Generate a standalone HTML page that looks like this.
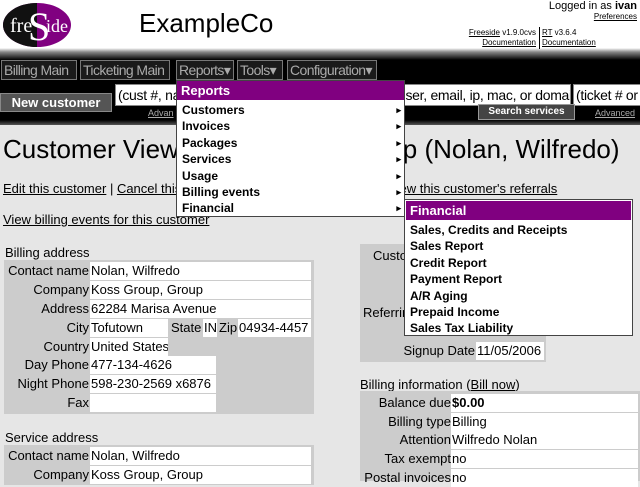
<!DOCTYPE html>
<html><head><meta charset="utf-8"><style>
*{margin:0;padding:0;box-sizing:border-box}
body{width:640px;height:477px;overflow:hidden;background:#e6e6e6;font-family:"Liberation Sans",sans-serif;font-size:13px;color:#000;position:relative}
.a{position:absolute;white-space:nowrap}
.top{position:absolute;left:0;top:0;width:640px;height:50px;background:#fff}
.band{position:absolute;left:0;top:48px;width:640px;height:77px;background:linear-gradient(#fff 0,#888 4px,#000 12px,#000 72px,#555 77px)}
.nb{position:absolute;top:60px;height:20px;border:1px solid #777;background:#1a1a1a;color:#aaa;font-size:14px;line-height:18px;padding:0 2px;white-space:nowrap;overflow:hidden;letter-spacing:-0.6px}
.inp{position:absolute;top:84px;height:22px;background:#fff;border:1px solid #888;font-size:14px;line-height:20px;padding-left:2px;overflow:hidden;white-space:nowrap;letter-spacing:-0.3px}
.menu{position:absolute;background:#fff;border:1px solid #444;font-size:12px;font-weight:bold}
.menu .h{background:#800080;color:#fff;font-size:13px;height:19px;line-height:19px;padding-left:4px}
.menu .i{height:16.4px;line-height:16.4px;padding-left:5px;position:relative}
.menu .i span{position:absolute;right:3px;font-size:9px}
u{text-decoration:underline}
.lbl{position:absolute;text-align:right;white-space:nowrap;line-height:18px;height:18px}
.val{position:absolute;background:#fff;padding-left:1px;white-space:nowrap;overflow:hidden;line-height:18px}
.box{position:absolute;background:#ccc}
</style></head><body>
<div class="top"></div>
<div class="band"></div>
<svg class="a" style="left:2px;top:2px" width="70" height="46" viewBox="0 0 70 46">
<ellipse cx="35" cy="23" rx="34" ry="22" fill="#800080"/>
<path d="M35 1 A34 22 0 0 0 35 45 Z" fill="#111"/>
<text x="8" y="30" font-family="Liberation Serif" font-size="20" fill="#fff">fre</text>
<text x="26" y="38" font-family="Liberation Serif" font-size="40" fill="#fff">S</text>
<text x="44" y="30" font-family="Liberation Serif" font-size="18" fill="#fff">ide</text>
</svg>
<div class="a" style="left:139px;top:8px;font-size:26px">ExampleCo</div>
<div class="a" style="right:3px;top:0;font-size:11px">Logged in as <b>ivan</b></div>
<div class="a" style="right:3px;top:12px;font-size:8px"><u>Preferences</u></div>
<div class="a" style="right:104px;top:28px;font-size:8px;text-align:right;line-height:10px"><u>Freeside</u> v1.9.0cvs<br><u>Documentation</u></div>
<div class="a" style="left:539px;top:27px;width:1px;height:22px;background:#000"></div>
<div class="a" style="left:542px;top:28px;font-size:8px;line-height:10px"><u>RT</u> v3.6.4<br><u>Documentation</u></div>
<div class="nb" style="left:1px;width:76px">Billing Main</div>
<div class="nb" style="left:80px;width:90px">Ticketing Main</div>
<div class="nb" style="left:176px;width:58px">Reports▾</div>
<div class="nb" style="left:237px;width:46px">Tools▾</div>
<div class="nb" style="left:287px;width:90px">Configuration▾</div>
<div class="a" style="left:0;top:93px;width:112px;height:19px;background:#555;border:1px solid #888;color:#fff;font-weight:bold;font-size:13px;line-height:17px;text-align:center">New customer</div>
<div class="inp" style="left:115px;width:64px">(cust #, na</div>
<div class="inp" style="left:395px;width:176px">user, email, ip, mac, or domai</div>
<div class="inp" style="left:573px;width:70px">(ticket # or s</div>
<div class="a" style="left:148px;top:108px;font-size:9px;color:#aaa"><u>Advan</u></div>
<div class="a" style="left:478px;top:104px;width:97px;height:16px;background:#444;border:1px solid #999;color:#fff;font-size:10px;font-weight:bold;text-align:center;line-height:14px">Search services</div>
<div class="a" style="left:595px;top:108px;font-size:9px;color:#aaa"><u>Advanced</u></div>

<div class="a" style="left:3px;top:134px;font-size:26px">Customer View: Koss Group, Group (Nolan, Wilfredo)</div>
<div class="a" style="left:3px;top:181px"><u>Edit this customer</u> | <u>Cancel this customer</u> | <u>Order a new customer</u> | <u>View this customer's referrals</u></div>
<div class="a" style="left:3px;top:212px"><u>View billing events for this customer</u></div>

<div class="a" style="left:5px;top:245px">Billing address</div>
<div class="box" style="left:4px;top:260px;width:310px;height:154px"></div>
<div class="lbl" style="right:551px;top:262px">Contact name</div><div class="val" style="left:90px;top:262px;width:221px;height:18px">Nolan, Wilfredo</div>
<div class="lbl" style="right:551px;top:281px">Company</div><div class="val" style="left:90px;top:281px;width:221px;height:18px">Koss Group, Group</div>
<div class="lbl" style="right:551px;top:300px">Address</div><div class="val" style="left:90px;top:300px;width:221px;height:18px">62284 Marisa Avenue</div>
<div class="lbl" style="right:551px;top:319px">City</div><div class="val" style="left:90px;top:319px;width:78px;height:18px">Tofutown</div>
<div class="a" style="left:171px;top:319px;line-height:18px">State</div><div class="val" style="left:203px;top:319px;width:14px;height:18px">IN</div>
<div class="a" style="left:219px;top:319px;line-height:18px">Zip</div><div class="val" style="left:238px;top:319px;width:73px;height:18px">04934-4457</div>
<div class="lbl" style="right:551px;top:338px">Country</div><div class="val" style="left:90px;top:338px;width:78px;height:18px">United States</div>
<div class="lbl" style="right:551px;top:356px">Day Phone</div><div class="val" style="left:90px;top:356px;width:126px;height:18px">477-134-4626</div>
<div class="lbl" style="right:551px;top:375px">Night Phone</div><div class="val" style="left:90px;top:375px;width:126px;height:18px">598-230-2569 x6876</div>
<div class="lbl" style="right:551px;top:394px">Fax</div><div class="val" style="left:90px;top:394px;width:126px;height:18px"></div>

<div class="a" style="left:5px;top:430px">Service address</div>
<div class="box" style="left:4px;top:445px;width:310px;height:40px"></div>
<div class="lbl" style="right:551px;top:447px">Contact name</div><div class="val" style="left:90px;top:447px;width:221px;height:18px">Nolan, Wilfredo</div>
<div class="lbl" style="right:551px;top:466px">Company</div><div class="val" style="left:90px;top:466px;width:221px;height:18px">Koss Group, Group</div>

<div class="box" style="left:360px;top:244px;width:186px;height:118px"></div>
<div class="a" style="left:373px;top:248px">Customer number</div>
<div class="a" style="left:363px;top:305px">Referring customer</div>
<div class="lbl" style="right:165px;top:342px">Signup Date</div><div class="val" style="left:476px;top:342px;width:68px;height:18px">11/05/2006</div>

<div class="a" style="left:360px;top:377px">Billing information (<u>Bill now</u>)</div>
<div class="box" style="left:360px;top:391px;width:280px;height:90px"></div>
<div class="lbl" style="right:189px;top:394px">Balance due</div><div class="val" style="left:451px;top:394px;width:187px;height:18px;font-weight:bold">$0.00</div>
<div class="lbl" style="right:189px;top:413px">Billing type</div><div class="val" style="left:451px;top:413px;width:187px;height:18px">Billing</div>
<div class="lbl" style="right:189px;top:431px">Attention</div><div class="val" style="left:451px;top:431px;width:187px;height:18px">Wilfredo Nolan</div>
<div class="lbl" style="right:189px;top:450px">Tax exempt</div><div class="val" style="left:451px;top:450px;width:187px;height:18px">no</div>
<div class="lbl" style="right:189px;top:469px">Postal invoices</div><div class="val" style="left:451px;top:469px;width:187px;height:18px">no</div>

<div class="menu" style="left:176px;top:80px;width:229px;height:137px">
<div class="h">Reports</div>
<div style="height:2px"></div>
<div class="i">Customers<span>▸</span></div>
<div class="i">Invoices<span>▸</span></div>
<div class="i">Packages<span>▸</span></div>
<div class="i">Services<span>▸</span></div>
<div class="i">Usage<span>▸</span></div>
<div class="i">Billing events<span>▸</span></div>
<div class="i">Financial<span>▸</span></div>
</div>
<div class="menu" style="left:404px;top:199px;width:229px;height:137px">
<div class="h" style="margin:1px">Financial</div>
<div style="height:1px"></div>
<div class="i">Sales, Credits and Receipts</div>
<div class="i">Sales Report</div>
<div class="i">Credit Report</div>
<div class="i">Payment Report</div>
<div class="i">A/R Aging</div>
<div class="i">Prepaid Income</div>
<div class="i">Sales Tax Liability</div>
</div>
</body></html>
